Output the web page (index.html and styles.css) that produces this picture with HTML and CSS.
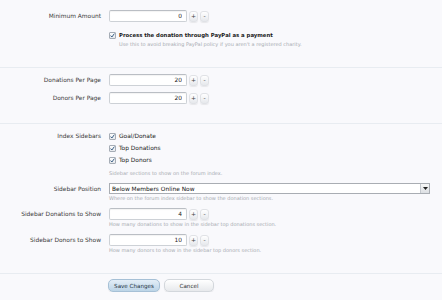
FILE: index.html
```html
<!DOCTYPE html>
<html lang="en">
<head>
    <meta charset="UTF-8">
    <title>Donation Options</title>
    <link rel="stylesheet" href="styles.css">
</head>
<body>
    <form class="options">
        <div class="block block-first">
            <dl class="row">
                <dt>Minimum Amount</dt>
                <dd>
                    <span class="spin">
                        <input class="num" type="text" value="0">
                        <button type="button" class="spin-btn">+</button>
                        <button type="button" class="spin-btn">-</button>
                    </span>
                </dd>
            </dl>
            <dl class="row row-check">
                <dt></dt>
                <dd>
                    <label class="check strong"><span class="cb"><svg viewBox="0 0 7 7" width="7" height="7"><path d="M1.6 3.6 L2.9 5 L5.4 1.6" fill="none" stroke="#3a5f85" stroke-width="1"/></svg></span>Process the donation through PayPal as a payment</label>
                    <p class="hint">Use this to avoid breaking PayPal policy if you aren't a registered charity.</p>
                </dd>
            </dl>
        </div>

        <div class="block">
            <dl class="row">
                <dt>Donations Per Page</dt>
                <dd>
                    <span class="spin">
                        <input class="num" type="text" value="20">
                        <button type="button" class="spin-btn">+</button>
                        <button type="button" class="spin-btn">-</button>
                    </span>
                </dd>
            </dl>
            <dl class="row">
                <dt>Donors Per Page</dt>
                <dd>
                    <span class="spin">
                        <input class="num" type="text" value="20">
                        <button type="button" class="spin-btn">+</button>
                        <button type="button" class="spin-btn">-</button>
                    </span>
                </dd>
            </dl>
        </div>

        <div class="block">
            <dl class="row">
                <dt>Index Sidebars</dt>
                <dd>
                    <label class="check"><span class="cb"><svg viewBox="0 0 7 7" width="7" height="7"><path d="M1.6 3.6 L2.9 5 L5.4 1.6" fill="none" stroke="#3a5f85" stroke-width="1"/></svg></span>Goal/Donate</label>
                    <label class="check"><span class="cb"><svg viewBox="0 0 7 7" width="7" height="7"><path d="M1.6 3.6 L2.9 5 L5.4 1.6" fill="none" stroke="#3a5f85" stroke-width="1"/></svg></span>Top Donations</label>
                    <label class="check"><span class="cb"><svg viewBox="0 0 7 7" width="7" height="7"><path d="M1.6 3.6 L2.9 5 L5.4 1.6" fill="none" stroke="#3a5f85" stroke-width="1"/></svg></span>Top Donors</label>
                    <p class="hint">Sidebar sections to show on the forum index.</p>
                </dd>
            </dl>
            <dl class="row">
                <dt>Sidebar Position</dt>
                <dd>
                    <span class="select-wrap">
                        <select class="select">
                            <option>Below Members Online Now</option>
                        </select>
                        <span class="select-arrow"><svg viewBox="0 0 5 3" width="5" height="3"><path d="M0 0 H5 L2.5 3 Z" fill="#222"/></svg></span>
                    </span>
                    <p class="hint">Where on the forum index sidebar to show the donation sections.</p>
                </dd>
            </dl>
            <dl class="row">
                <dt>Sidebar Donations to Show</dt>
                <dd>
                    <span class="spin">
                        <input class="num" type="text" value="4">
                        <button type="button" class="spin-btn">+</button>
                        <button type="button" class="spin-btn">-</button>
                    </span>
                    <p class="hint">How many donations to show in the sidebar top donations section.</p>
                </dd>
            </dl>
            <dl class="row">
                <dt>Sidebar Donors to Show</dt>
                <dd>
                    <span class="spin">
                        <input class="num" type="text" value="10">
                        <button type="button" class="spin-btn">+</button>
                        <button type="button" class="spin-btn">-</button>
                    </span>
                    <p class="hint">How many donors to show in the sidebar top donors section.</p>
                </dd>
            </dl>
        </div>

        <div class="submit-bar">
            <button type="submit" class="button primary">Save Changes</button>
            <button type="reset" class="button">Cancel</button>
        </div>
    </form>
</body>
</html>
```

FILE: styles.css
```css
body {
    margin: 0;
    background-color: #f9f9fc;
    font-family: "DejaVu Sans", Verdana, sans-serif;
    font-size: 5.9px;
    color: #222;
}

.options {
    margin: 0;
}

.block {
    padding: 6px 0 19px;
    border-bottom: 1px solid #e8ecf1;
}

.block-first {
    padding-top: 10px;
}

.row {
    display: grid;
    grid-template-columns: 101px 1fr;
    column-gap: 8px;
    margin: 6px 0 0;
}

.row:first-child {
    margin-top: 0;
}

.row-check {
    margin-top: 8px;
}

dt {
    text-align: right;
    line-height: 12px;
    color: #3a3a3a;
}

dd {
    margin: 0;
}

.spin {
    display: flex;
    align-items: center;
    gap: 2px;
    height: 12px;
}

.num {
    box-sizing: border-box;
    width: 78px;
    height: 12px;
    margin: 0;
    padding: 0 4px 0 0;
    border: 1px solid #cdd1d6;
    border-top-color: #babec4;
    border-radius: 2px;
    background: #fff;
    box-shadow: inset 0 1px 1px rgba(0, 0, 0, 0.05);
    font-family: inherit;
    font-size: 5.9px;
    color: #222;
    text-align: right;
}

.spin-btn {
    box-sizing: border-box;
    width: 9px;
    height: 11px;
    margin: 0;
    padding: 0;
    border: 1px solid #e0e2e6;
    border-radius: 3px;
    background: linear-gradient(#ffffff, #e6e8ec);
    box-shadow: 0 1px 1px rgba(0, 0, 0, 0.07);
    font-family: inherit;
    font-size: 6px;
    line-height: 8px;
    color: #444;
}

.check {
    display: flex;
    align-items: center;
    gap: 3px;
    height: 12px;
    color: #1a1a1a;
}

.check.strong {
    height: 10px;
    font-weight: bold;
    font-size: 5.35px;
}

.cb {
    box-sizing: border-box;
    display: flex;
    width: 7px;
    height: 7px;
    border: 1px solid #a6adb6;
    border-radius: 1px;
    background: linear-gradient(#fdfdfd, #e6e9ed);
    align-items: center;
    justify-content: center;
}

.cb svg {
    display: block;
    flex: none;
}

.hint {
    margin: 0;
    line-height: 8px;
    font-size: 5px;
    color: #a6aab0;
}

.check + .hint {
    margin-top: 3px;
}

.row-check .hint {
    margin-left: 10px;
    margin-top: 0;
}

.select-wrap {
    position: relative;
    display: block;
    width: 321px;
    height: 11px;
}

.select {
    box-sizing: border-box;
    appearance: none;
    width: 100%;
    height: 11px;
    margin: 0;
    padding: 0 0 0 2px;
    border: 1px solid #a9adb3;
    border-radius: 0;
    background: #fff;
    font-family: inherit;
    font-size: 5.9px;
    color: #111;
}

.select-arrow {
    position: absolute;
    top: 1px;
    right: 1px;
    width: 8px;
    height: 9px;
    display: flex;
    align-items: center;
    justify-content: center;
    border-left: 1px solid #c4c8ce;
    background: linear-gradient(#f7f7f7, #dcdfe3);
}

.submit-bar {
    display: flex;
    gap: 4px;
    padding: 5px 0 0 108px;
}

.button {
    box-sizing: border-box;
    width: 50px;
    height: 13px;
    margin: 0;
    padding: 0;
    border: 1px solid #d3d7dc;
    border-radius: 5px;
    background: linear-gradient(#ffffff, #e7e9ec);
    font-family: inherit;
    font-size: 5.6px;
    color: #333;
    box-shadow: 0 1px 1px rgba(0, 0, 0, 0.08);
}

.button.primary {
    width: 52px;
    border-color: #a6c0d6;
    background: linear-gradient(#e3eef7, #bcd4e7);
    color: #1f3446;
}
```
